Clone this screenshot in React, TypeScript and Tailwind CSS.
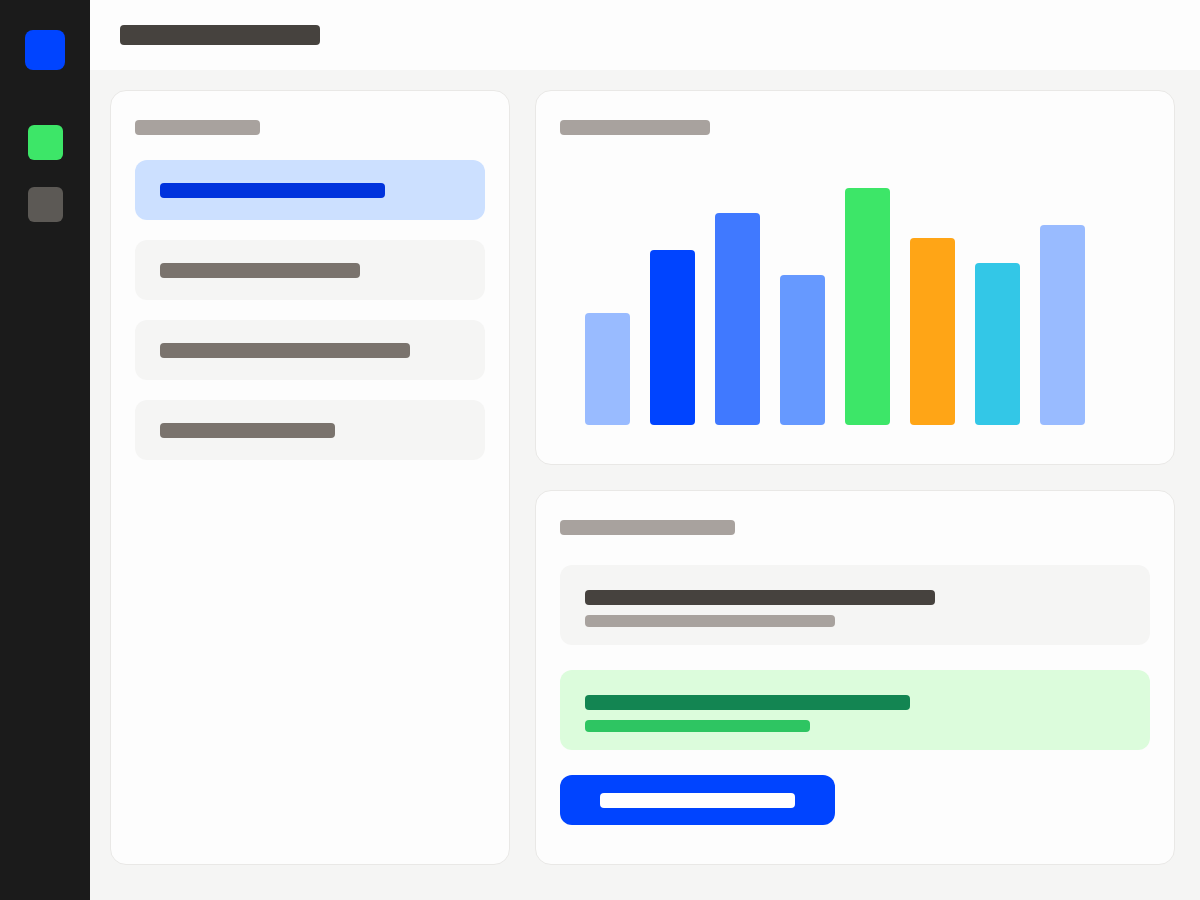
export default function App() {
  const items = [
    { w: "w-[225px]", active: true },
    { w: "w-[200px]", active: false },
    { w: "w-[250px]", active: false },
    { w: "w-[175px]", active: false },
  ];

  const bars = [
    { h: 112, c: "bg-[#99bbff]" },
    { h: 175, c: "bg-[#0044ff]" },
    { h: 212, c: "bg-[#4079ff]" },
    { h: 150, c: "bg-[#6699ff]" },
    { h: 237, c: "bg-[#3de668]" },
    { h: 187, c: "bg-[#ffa516]" },
    { h: 162, c: "bg-[#33c7e7]" },
    { h: 200, c: "bg-[#99bbff]" },
  ];

  return (
    <div className="flex h-[900px] w-[1200px] bg-[#f5f5f4] font-['Inter',sans-serif]">
      {/* sidebar */}
      <aside className="flex w-[90px] flex-col items-center bg-[#1b1b1b] pt-[30px]">
        <div className="h-10 w-10 rounded-lg bg-[#0044ff]" />
        <div className="mt-[55px] h-[35px] w-[35px] rounded-md bg-[#3de668]" />
        <div className="mt-[27px] h-[35px] w-[35px] rounded-md bg-[#5c5955]" />
      </aside>

      <div className="flex flex-1 flex-col">
        <header className="flex h-[70px] items-center bg-[#fdfdfd] pl-[30px]">
          <div className="h-5 w-[200px] rounded bg-[#46423e]" />
        </header>

        <main className="flex gap-[25px] p-5">
          {/* list card */}
          <section className="h-[775px] w-[400px] rounded-2xl border border-[#e9e8e6] bg-[#fdfdfd] px-6 pt-[29px]">
            <div className="h-[15px] w-[125px] rounded bg-[#a8a29e]" />
            <div className="mt-[25px] flex flex-col gap-5">
              {items.map((it, i) => (
                <div
                  key={i}
                  className={`flex h-[60px] items-center rounded-xl px-[25px] ${it.active ? "bg-[#cce0ff]" : "bg-[#f5f5f4]"}`}
                >
                  <div className={`h-[15px] rounded ${it.w} ${it.active ? "bg-[#0033dd]" : "bg-[#7a736d]"}`} />
                </div>
              ))}
            </div>
          </section>

          <div className="flex w-[640px] flex-col gap-[25px]">
            {/* chart card */}
            <section className="h-[375px] rounded-2xl border border-[#e9e8e6] bg-[#fdfdfd] px-6 pt-[29px]">
              <div className="h-[15px] w-[150px] rounded bg-[#a8a29e]" />
              <div className="mt-10 flex h-[250px] items-end gap-5 pl-[25px]">
                {bars.map((b, i) => (
                  <div key={i} className={`w-[45px] rounded ${b.c}`} style={{ height: b.h }} />
                ))}
              </div>
            </section>

            {/* detail card */}
            <section className="h-[375px] rounded-2xl border border-[#e9e8e6] bg-[#fdfdfd] px-6 pt-[29px]">
              <div className="h-[15px] w-[175px] rounded bg-[#a8a29e]" />
              <div className="mt-[30px] flex h-20 flex-col gap-[10px] rounded-xl bg-[#f5f5f4] px-[25px] pt-[25px]">
                <div className="h-[15px] w-[350px] rounded bg-[#46423e]" />
                <div className="h-3 w-[250px] rounded bg-[#a8a29e]" />
              </div>
              <div className="mt-[25px] flex h-20 flex-col gap-[10px] rounded-xl bg-[#dcfcdc] px-[25px] pt-[25px]">
                <div className="h-[15px] w-[325px] rounded bg-[#138552]" />
                <div className="h-3 w-[225px] rounded bg-[#2ec562]" />
              </div>
              <button className="mt-[25px] flex h-[50px] w-[275px] items-center justify-start rounded-xl bg-[#0044ff] pl-10">
                <span className="block h-[15px] w-[195px] rounded bg-white" />
              </button>
            </section>
          </div>
        </main>
      </div>
    </div>
  );
}
